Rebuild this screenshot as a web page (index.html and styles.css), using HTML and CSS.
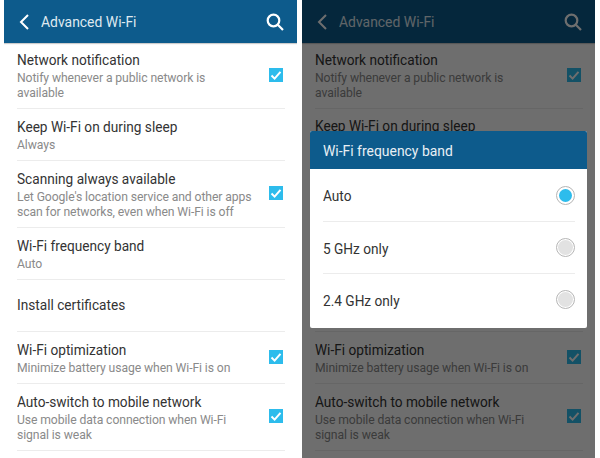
FILE: index.html
```html
<!DOCTYPE html>
<html lang="en">

<head>
    <meta charset="UTF-8" />
    <meta name="viewport" content="width=device-width, initial-scale=1.0" />
    <title>Advanced Wi-Fi</title>
    <link rel="stylesheet" href="styles.css">
</head>

<body>
    <div class="contenedor">
        <!-- Left phone -->
        <div class="phone">
            <div class="barra">
                <svg class="atras" width="14" height="18" viewBox="0 0 14 18"><path d="M11 2 L4 9 L11 16" /></svg>
                <span class="titulo">Advanced Wi-Fi</span>
                <svg class="lupa" width="20" height="20" viewBox="0 0 20 20"><circle cx="8.5" cy="8.5" r="5.8" /><path d="M12.8 12.8 L18 18" /></svg>
            </div>
            <div class="lista">
                <div class="fila alta">
                    <div class="texto">
                        <h3>Network notification</h3>
                        <p>Notify whenever a public network is<br>available</p>
                    </div>
                    <span class="check"><svg width="14" height="14" viewBox="0 0 14 14"><path d="M2.5 7.5 L5.6 10.6 L11.5 3.8" /></svg></span>
                </div>
                <div class="fila">
                    <div class="texto">
                        <h3>Keep Wi-Fi on during sleep</h3>
                        <p>Always</p>
                    </div>
                </div>
                <div class="fila alta2">
                    <div class="texto">
                        <h3>Scanning always available</h3>
                        <p>Let Google's location service and other apps<br>scan for networks, even when Wi-Fi is off</p>
                    </div>
                    <span class="check"><svg width="14" height="14" viewBox="0 0 14 14"><path d="M2.5 7.5 L5.6 10.6 L11.5 3.8" /></svg></span>
                </div>
                <div class="fila">
                    <div class="texto">
                        <h3>Wi-Fi frequency band</h3>
                        <p>Auto</p>
                    </div>
                </div>
                <div class="fila">
                    <div class="texto">
                        <h3>Install certificates</h3>
                    </div>
                </div>
                <div class="fila">
                    <div class="texto">
                        <h3>Wi-Fi optimization</h3>
                        <p>Minimize battery usage when Wi-Fi is on</p>
                    </div>
                    <span class="check"><svg width="14" height="14" viewBox="0 0 14 14"><path d="M2.5 7.5 L5.6 10.6 L11.5 3.8" /></svg></span>
                </div>
                <div class="fila alta2">
                    <div class="texto">
                        <h3>Auto-switch to mobile network</h3>
                        <p>Use mobile data connection when Wi-Fi<br>signal is weak</p>
                    </div>
                    <span class="check"><svg width="14" height="14" viewBox="0 0 14 14"><path d="M2.5 7.5 L5.6 10.6 L11.5 3.8" /></svg></span>
                </div>
            </div>
        </div>

        <!-- Right phone, the rows behind the dialog are left empty -->
        <div class="phone">
            <div class="barra">
                <svg class="atras" width="14" height="18" viewBox="0 0 14 18"><path d="M11 2 L4 9 L11 16" /></svg>
                <span class="titulo">Advanced Wi-Fi</span>
                <svg class="lupa" width="20" height="20" viewBox="0 0 20 20"><circle cx="8.5" cy="8.5" r="5.8" /><path d="M12.8 12.8 L18 18" /></svg>
            </div>
            <div class="lista">
                <div class="fila alta">
                    <div class="texto">
                        <h3>Network notification</h3>
                        <p>Notify whenever a public network is<br>available</p>
                    </div>
                    <span class="check"><svg width="14" height="14" viewBox="0 0 14 14"><path d="M2.5 7.5 L5.6 10.6 L11.5 3.8" /></svg></span>
                </div>
                <div class="fila tapada">
                    <h3>Keep Wi-Fi on during sleep</h3>
                </div>
                <div class="fila">
                    <div class="texto">
                        <h3>Wi-Fi optimization</h3>
                        <p>Minimize battery usage when Wi-Fi is on</p>
                    </div>
                    <span class="check"><svg width="14" height="14" viewBox="0 0 14 14"><path d="M2.5 7.5 L5.6 10.6 L11.5 3.8" /></svg></span>
                </div>
                <div class="fila alta2">
                    <div class="texto">
                        <h3>Auto-switch to mobile network</h3>
                        <p>Use mobile data connection when Wi-Fi<br>signal is weak</p>
                    </div>
                    <span class="check"><svg width="14" height="14" viewBox="0 0 14 14"><path d="M2.5 7.5 L5.6 10.6 L11.5 3.8" /></svg></span>
                </div>
            </div>
            <div class="velo"></div>
            <div class="dialogo">
                <div class="dialogo-titulo"><span>Wi-Fi frequency band</span></div>
                <div class="opcion"><span>Auto</span><i class="radio activo"></i></div>
                <div class="opcion"><span>5 GHz only</span><i class="radio"></i></div>
                <div class="opcion"><span>2.4 GHz only</span><i class="radio"></i></div>
            </div>
        </div>
    </div>
</body>

</html>
```

FILE: styles.css
```css
* {
    box-sizing: border-box;
    margin: 0;
    padding: 0;
}

html,
body {
    height: 458px;
    overflow: hidden;
    background-color: white;
}

body {
    font-family: Roboto, "Liberation Sans", sans-serif;
}

.contenedor {
    display: flex;
    gap: 5px;
    padding-left: 4px;
}

.phone {
    position: relative;
    width: 293px;
    height: 458px;
    overflow: hidden;
    background-color: white;
}

/* The phone font is narrower than Roboto */
h3,
.titulo,
.dialogo-titulo span,
.opcion span {
    transform: scaleX(0.91);
    transform-origin: left center;
}

.barra {
    display: flex;
    align-items: center;
    height: 43px;
    padding: 0 12px 0 13px;
    background-color: #0d5b8c;
    box-shadow: 0 1px 1px rgba(0, 0, 0, 0.2);
}

.atras {
    fill: none;
    stroke: white;
    stroke-width: 2;
}

.titulo {
    margin-left: 10px;
    font-size: 15.3px;
    color: #dfe9f0;
    flex-grow: 1;
}

.lupa {
    fill: none;
    stroke: white;
    stroke-width: 2.2;
}

.lista {
    padding: 0 12px 0 13px;
}

.fila {
    display: flex;
    align-items: center;
    height: 52px;
    border-bottom: 1px solid #ececec;
}

.alta {
    height: 66px;
}

.alta2 {
    height: 67px;
}

/* Keep Wi-Fi row plus the three rows hidden by the dialog */
.tapada {
    align-items: flex-start;
    height: 223px;
    padding-top: 7px;
}

.texto {
    flex-grow: 1;
}

h3 {
    font-weight: 400;
    font-size: 15px;
    line-height: 20px;
    margin-bottom: 1px;
    color: #333;
}

p {
    font-size: 12.2px;
    line-height: 15px;
    letter-spacing: -0.1px;
    color: #8a8a8a;
}

.check {
    display: flex;
    align-items: center;
    justify-content: center;
    width: 14px;
    height: 14px;
    margin: 0 2px 2px 0;
    background-color: #2dbcec;
}

.check svg {
    fill: none;
    stroke: white;
    stroke-width: 2;
}

.velo {
    position: absolute;
    inset: 0;
    background-color: rgba(0, 0, 0, 0.57);
}

.dialogo {
    position: absolute;
    top: 131px;
    left: 8px;
    width: 277px;
    height: 197px;
    border-radius: 2px;
    overflow: hidden;
    background-color: white;
}

.dialogo-titulo {
    display: flex;
    align-items: center;
    height: 38px;
    padding: 1px 0 0 13px;
    font-size: 15.3px;
    color: #e8eff4;
    background-color: #0d5b8c;
}

.opcion {
    display: flex;
    align-items: center;
    justify-content: space-between;
    height: 52px;
    margin: 0 12px 0 13px;
    font-size: 15px;
    color: #333;
    border-top: 1px solid #ececec;
}

.opcion span {
    padding-top: 2px;
}

.dialogo-titulo + .opcion {
    border-top: none;
}

.radio {
    display: block;
    width: 19px;
    height: 19px;
    border: 1px solid #b5b5b5;
    border-radius: 50%;
    background-color: #e2e2e2;
    background-clip: content-box;
    padding: 1px;
}

.activo {
    background-color: #2dbcec;
    padding: 2px;
}
```
